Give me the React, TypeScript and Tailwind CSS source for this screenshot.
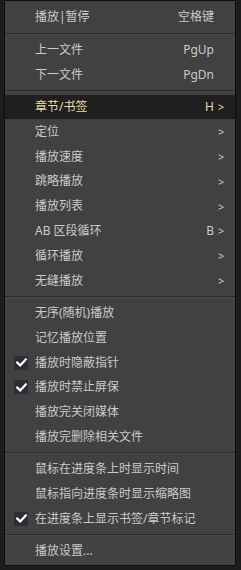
import React from "react";

type Item =
  | { type: "sep" }
  | { type: "item"; label: string; key?: string; arrow?: boolean; checked?: boolean; active?: boolean };

const items: Item[] = [
  { type: "item", label: "播放|暂停", key: "空格键" },
  { type: "sep" },
  { type: "item", label: "上一文件", key: "PgUp" },
  { type: "item", label: "下一文件", key: "PgDn" },
  { type: "sep" },
  { type: "item", label: "章节/书签", key: "H", arrow: true, active: true },
  { type: "item", label: "定位", arrow: true },
  { type: "item", label: "播放速度", arrow: true },
  { type: "item", label: "跳略播放", arrow: true },
  { type: "item", label: "播放列表", arrow: true },
  { type: "item", label: "AB 区段循环", key: "B", arrow: true },
  { type: "item", label: "循环播放", arrow: true },
  { type: "item", label: "无缝播放", arrow: true },
  { type: "sep" },
  { type: "item", label: "无序(随机)播放" },
  { type: "item", label: "记忆播放位置" },
  { type: "item", label: "播放时隐蔽指针", checked: true },
  { type: "item", label: "播放时禁止屏保", checked: true },
  { type: "item", label: "播放完关闭媒体" },
  { type: "item", label: "播放完删除相关文件" },
  { type: "sep" },
  { type: "item", label: "鼠标在进度条上时显示时间" },
  { type: "item", label: "鼠标指向进度条时显示缩略图" },
  { type: "item", label: "在进度条上显示书签/章节标记", checked: true },
  { type: "sep" },
  { type: "item", label: "播放设置..." },
];

function Check() {
  return (
    <div className="absolute left-[9px] top-1/2 -translate-y-1/2 w-[14px] h-[14px] bg-[#2d2d35] flex items-center justify-center">
      <svg width="11" height="9" viewBox="0 0 11 9">
        <path d="M1.2 4.6 L4.2 7.4 L9.8 1.4" fill="none" stroke="#ffffff" strokeWidth="2.2" strokeLinecap="square" />
      </svg>
    </div>
  );
}

export default function App() {
  return (
    <div
      className="w-[241px] h-[570px] bg-[#1c1c1e] overflow-hidden"
      style={{ fontFamily: '"Noto Sans", "Noto Sans CJK SC", sans-serif' }}
    >
      <div className="ml-[4px] w-[232px] border border-[#0e0e0e] bg-[#414141] pt-[4px] pb-[1px]">
        {items.map((it, i) =>
          it.type === "sep" ? (
            <div key={i} className="h-[7.6px] flex flex-col justify-center">
              <div className="h-px bg-[#2a2a2a]" />
              <div className="h-px bg-[#4a4a4a]" />
            </div>
          ) : (
            <div
              key={i}
              className={
                "relative h-[24.8px] flex items-center text-[12px] leading-none " +
                (it.active ? "bg-[#1f1f1f] text-[#e9dcaa]" : "text-[#cacaca]")
              }
            >
              {it.checked && <Check />}
              <span className="pl-[30px] whitespace-nowrap">{it.label}</span>
              <span className="ml-auto whitespace-nowrap">{it.key ?? ""}</span>
              <span className="w-[21px] pl-[4px] text-[11px] whitespace-nowrap">{it.arrow ? ">" : ""}</span>
            </div>
          )
        )}
      </div>
    </div>
  );
}
